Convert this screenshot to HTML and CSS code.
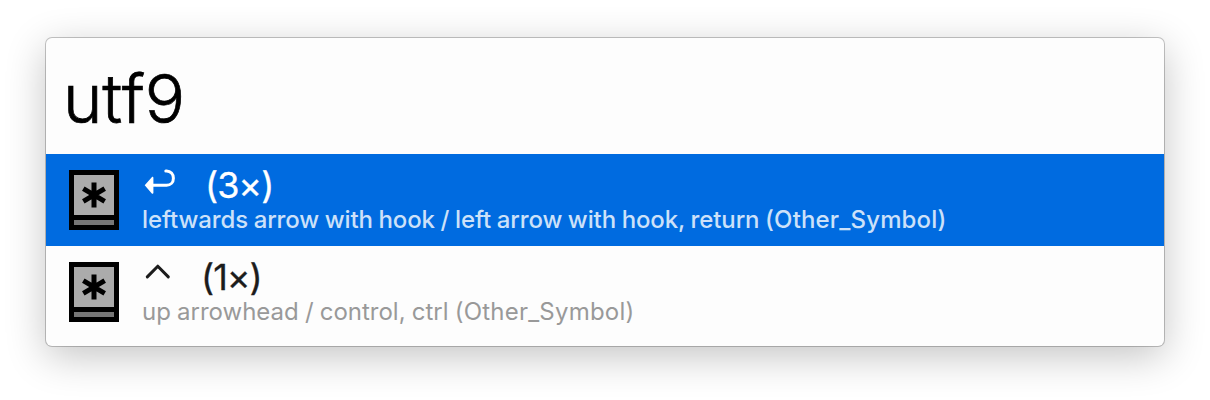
FILE: index.html
```html
<!DOCTYPE html>
<html lang="en">
<head>
<meta charset="utf-8">
<title>utf9</title>
<link rel="stylesheet" href="styles.css">
</head>
<body>
<svg class="defs" width="0" height="0">
  <symbol id="key" viewBox="0 0 50 60">
    <path fill="#000" d="M0 0h50v60H0z"/>
    <path fill="#ababab" d="M5 5h40v40H5z"/>
    <path fill="#767676" d="M5 50h40v5H5z"/>
    <path stroke="#000" stroke-width="5" d="M25 12.5v25M14.3 18.7l21.4 12.6M35.7 18.7L14.3 31.3"/>
  </symbol>
</svg>
<main class="panel">
  <div class="search"><span class="query">utf9</span></div>
  <div class="row selected">
    <svg class="icon"><use href="#key"/></svg>
    <div class="content">
      <div class="title">
        <svg class="glyph hook" viewBox="0 0 32 26"><path class="line" d="M8 16.3h14.6c4 0 6.8-3 6.8-7.1s-2.8-7.3-6.8-7.3h-.8"/><path class="head" d="M.7 16.3L7.8 8.2c.7-.8 1.6-.5 1.6.6v15c0 1.1-.9 1.4-1.6.6z"/></svg>
        <span class="count">(3×)</span>
      </div>
      <div class="subtitle">leftwards arrow with hook / left arrow with hook, return <span class="category">(Other_Symbol)</span></div>
    </div>
  </div>
  <div class="row">
    <svg class="icon"><use href="#key"/></svg>
    <div class="content">
      <div class="title">
        <svg class="glyph" viewBox="0 0 32 26"><path class="line" d="M3.3 15.9L13.8 5.2l10.5 10.7"/></svg>
        <span class="count one">(1×)</span>
      </div>
      <div class="subtitle">up arrowhead / control, ctrl <span class="category">(Other_Symbol)</span></div>
    </div>
  </div>
</main>
</body>
</html>
```
FILE: styles.css
```css
body {
  margin: 0;
  padding: 38px 46px 54px;
  background: #fff;
  font-family: Inter, "Liberation Sans", sans-serif;
  overflow: hidden;
}
.defs { position: absolute; }
.panel {
  height: 308px;
  border-radius: 6px;
  background: #fdfdfd;
  box-shadow: 0 0 0 1px rgba(0, 0, 0, .22), 0 10px 40px rgba(0, 0, 0, .24);
}
.search {
  height: 116px;
  padding-left: 17px;
  line-height: 121px;
  font-size: 67px;
  font-weight: 300;
  font-kerning: none;
  letter-spacing: -.3px;
  -webkit-text-stroke: .7px #000;
  color: #000;
}
.row {
  display: flex;
  box-sizing: border-box;
  height: 92px;
  padding: 16px 23px;
  gap: 23px;
  color: #1c1c1c;
}
.icon { width: 50px; height: 60px; flex: none; }
.content { white-space: nowrap; }
.title { display: flex; height: 34px; }
.glyph { width: 32px; height: 26px; margin: -1px 0 0 2px; }
.line {
  fill: none;
  stroke: currentColor;
  stroke-width: 3;
  stroke-linecap: round;
  stroke-linejoin: round;
}
.head { fill: currentColor; }
.count {
  margin-left: 29px;
  font-size: 36px;
  line-height: 30px;
  letter-spacing: -1px;
  -webkit-text-stroke: .3px currentColor;
}
.count.one { margin-left: 25px; }
.subtitle {
  height: 30px;
  font-size: 24px;
  line-height: 31px;
  word-spacing: -.6px;
  color: #999;
}
.category { letter-spacing: .22px; }
.selected { background: #006be0; color: #fff; }
.selected .subtitle {
  font-weight: 450;
  letter-spacing: -.12px;
  color: #cce1f9;
}
.selected .category { letter-spacing: .15px; }
```
